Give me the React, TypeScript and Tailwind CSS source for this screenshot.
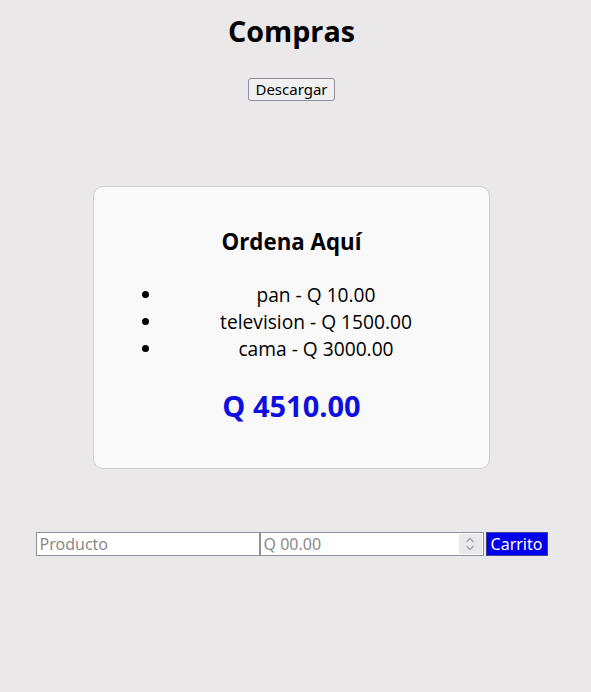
export default function App() {
  const items = ["pan - Q 10.00", "television - Q 1500.00", "cama - Q 3000.00"];
  return (
    <div className="min-h-[692px] bg-[#eae8e9] flex flex-col items-center text-black pr-[8px]" style={{ fontFamily: '"Open Sans", "Noto Sans", sans-serif' }}>
      <h1 className="text-[28.7px] font-bold mt-[11px] leading-[40px]">Compras</h1>
      <button className="mt-[27px] h-[23px] px-[6px] text-[15px] leading-[19px] bg-[#f0f0f0] border border-[#8f8f9d] rounded-[3px]" style={{ fontFamily: '"Noto Sans", sans-serif' }}>Descargar</button>
      <div className="mt-[85px] w-[397px] h-[283px] bg-[#f9f9f9] border border-[#cfcdce] rounded-[10px] flex flex-col items-center pt-[39px]">
        <h2 className="text-[22.3px] font-bold leading-[32px]">Ordena Aquí</h2>
        <ul className="list-disc self-stretch pl-[69px] pr-[20px] mt-[23px] text-[19.2px] leading-[27px] text-center">
          {items.map((t) => (
            <li key={t}>{t}</li>
          ))}
        </ul>
        <div className="mt-[24px] text-[29px] font-bold text-[#0f0fe0] leading-[40px]">Q 4510.00</div>
      </div>
      <div className="mt-[63px] flex items-center">
        <input placeholder="Producto" className="w-[224px] h-[24px] bg-white border border-[#8f8f9d] px-[3px] text-[16px] placeholder:text-[#8a8a8a]" style={{ fontFamily: '"Noto Sans", sans-serif' }} />
        <div className="w-[224px] h-[24px] bg-white border border-[#8f8f9d] flex items-center pl-[3px] pr-[1px]">
          <span className="flex-1 text-[16px] text-[#8a8a8a]" style={{ fontFamily: '"Noto Sans", sans-serif' }}>Q 00.00</span>
          <span className="w-[23px] h-[20px] bg-[#e9e9ed] flex items-center justify-center">
            <svg width="10" height="16" viewBox="0 0 10 16" fill="none" stroke="#a0a0a0" strokeWidth="1.3">
              <path d="M1.5 6l3.5-3.5 3.5 3.5" />
              <path d="M1.5 10l3.5 3.5 3.5-3.5" />
            </svg>
          </span>
        </div>
        <button className="ml-[2px] w-[62px] h-[24px] bg-[#0000ee] text-white border border-[#404090] text-[16px] leading-[20px]" style={{ fontFamily: '"Noto Sans", sans-serif' }}>Carrito</button>
      </div>
    </div>
  );
}
